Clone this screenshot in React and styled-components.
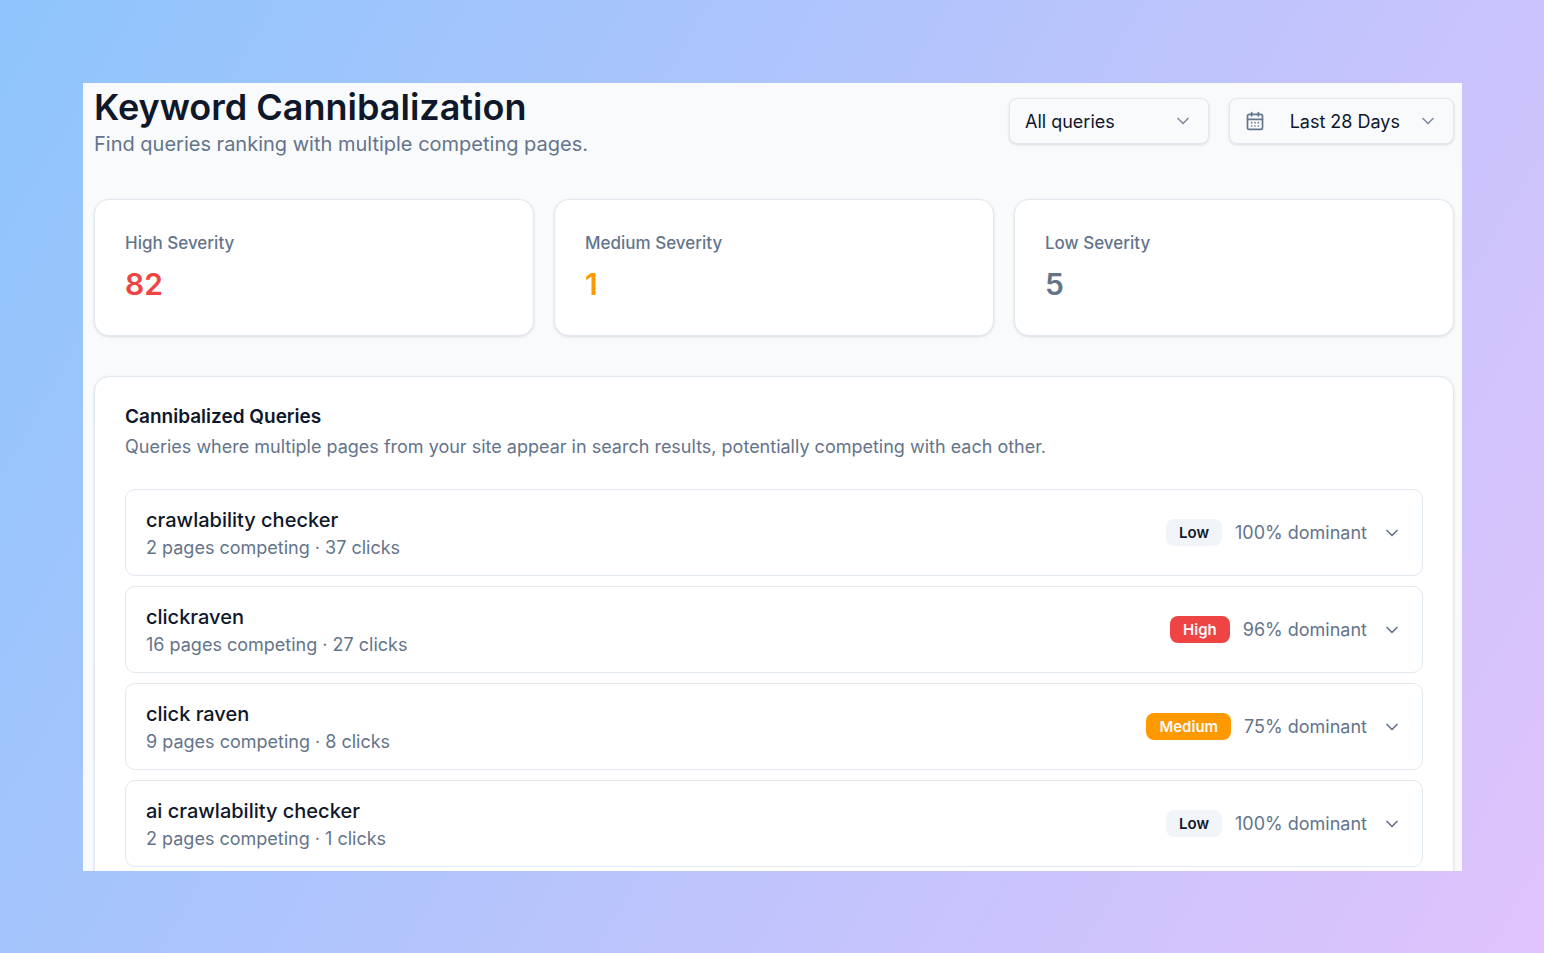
import React, { useState } from "react";
import styled, { createGlobalStyle } from "styled-components";
import { CalendarDays, ChevronDown } from "lucide-react";

const colors = {
  text: "#0f172a",
  muted: "#64748b",
  border: "#e2e8f0",
  red: "#ef4444",
  amber: "#ff9900",
  soft: "#f1f5f9",
};

const GlobalStyle = createGlobalStyle`
  *,
  *::before,
  *::after {
    box-sizing: border-box;
  }
  body {
    margin: 0;
    font-family: Inter, "Liberation Sans", sans-serif;
    color: ${colors.text};
  }
  button,
  select {
    font: inherit;
    color: inherit;
    cursor: pointer;
  }
  h1,
  h2,
  h3,
  p {
    margin: 0;
  }
`;

const Backdrop = styled.div`
  height: 100vh;
  padding: 83px 82px 82px 83px;
  background: linear-gradient(120deg, #8ec5fc 0%, #e0c3fc 100%);
`;

const Page = styled.main`
  height: 100%;
  overflow: hidden;
  padding: 0 8px 0 11px;
  background: #f8fafc;
`;

const PageHeader = styled.header`
  display: flex;
  align-items: center;
  justify-content: space-between;
  padding: 1px 0 41px;
`;

const Title = styled.h1`
  font-size: 36px;
  font-weight: 600;
  line-height: 46px;
`;

const Subtitle = styled.p`
  font-size: 20px;
  line-height: 28px;
  color: ${colors.muted};
`;

const Controls = styled.div`
  display: flex;
  gap: 20px;
`;

const SelectWrapper = styled.div`
  display: grid;
  align-items: center;
  width: 200px;
  svg {
    grid-area: 1 / 1;
    justify-self: end;
    margin-right: 16px;
    color: ${colors.muted};
    opacity: 0.8;
    pointer-events: none;
  }
`;

const Select = styled.select`
  grid-area: 1 / 1;
  appearance: none;
  height: 46px;
  padding: 0 15px;
  border: 1px solid ${colors.border};
  border-radius: 8px;
  background: #f8fafc;
  box-shadow: 0 1px 3px rgba(0, 0, 0, 0.12);
  font-size: 18px;
`;

const DateButton = styled.button`
  display: flex;
  align-items: center;
  height: 46px;
  width: 225px;
  padding: 0 15px;
  border: 1px solid ${colors.border};
  border-radius: 8px;
  background: #f8fafc;
  box-shadow: 0 1px 3px rgba(0, 0, 0, 0.12);
  font-size: 18px;
  svg {
    color: ${colors.muted};
  }
  svg:last-child {
    opacity: 0.8;
  }
  span {
    flex: 1;
    text-align: right;
    margin-right: 18px;
  }
`;

const Card = styled.section`
  padding: 29px 30px;
  border: 1px solid ${colors.border};
  border-radius: 15px;
  background: #fff;
  box-shadow: 0 1px 3px rgba(0, 0, 0, 0.12);
`;

const StatGrid = styled.div`
  display: grid;
  grid-template-columns: repeat(3, 1fr);
  gap: 20px;
  margin-bottom: 40px;
`;

const StatLabel = styled.h2`
  font-size: 17px;
  font-weight: 500;
  line-height: 28px;
  color: ${colors.muted};
`;

const StatValue = styled.p`
  padding: 8px 0 3px;
  font-size: 30px;
  font-weight: 600;
  line-height: 38px;
  color: ${(props) => props.$color};
`;

const CardTitle = styled.h2`
  font-size: 19px;
  font-weight: 600;
  line-height: 21px;
`;

const CardText = styled.p`
  margin: 7px 0 29px;
  font-size: 18px;
  line-height: 26px;
  color: ${colors.muted};
`;

const QueryList = styled.div`
  display: flex;
  flex-direction: column;
  gap: 10px;
`;

const QueryRow = styled.button`
  display: flex;
  align-items: center;
  width: 100%;
  padding: 15px 20px;
  border: 1px solid ${colors.border};
  border-radius: 10px;
  background: #fff;
  text-align: left;
  svg {
    margin-left: 15px;
    color: ${colors.muted};
  }
`;

const QueryInfo = styled.span`
  display: flex;
  flex: 1;
  flex-direction: column;
`;

const QueryName = styled.span`
  font-size: 20px;
  font-weight: 500;
  line-height: 30px;
`;

const QueryMeta = styled.span`
  font-size: 18px;
  line-height: 25px;
  color: ${colors.muted};
`;

const badgeStyles = {
  Low: { background: colors.soft, color: colors.text },
  High: { background: colors.red, color: "#f8fafc" },
  Medium: { background: colors.amber, color: "#f8fafc" },
};

const Badge = styled.span`
  margin-right: 13px;
  padding: 3px 13px;
  border-radius: 8px;
  background: ${(props) => badgeStyles[props.$severity].background};
  color: ${(props) => badgeStyles[props.$severity].color};
  font-size: 15px;
  font-weight: 600;
  line-height: 21px;
`;

const stats = [
  { label: "High Severity", value: 82, color: colors.red },
  { label: "Medium Severity", value: 1, color: colors.amber },
  { label: "Low Severity", value: 5, color: colors.muted },
];

const queries = [
  { name: "crawlability checker", pages: 2, clicks: 37, severity: "Low", share: 100 },
  { name: "clickraven", pages: 16, clicks: 27, severity: "High", share: 96 },
  { name: "click raven", pages: 9, clicks: 8, severity: "Medium", share: 75 },
  { name: "ai crawlability checker", pages: 2, clicks: 1, severity: "Low", share: 100 },
];

const Query = ({ query }) => {
  const [open, setOpen] = useState(false);
  return (
    <QueryRow type="button" aria-expanded={open} onClick={() => setOpen(!open)}>
      <QueryInfo>
        <QueryName>{query.name}</QueryName>
        <QueryMeta>
          {query.pages} pages competing · {query.clicks} clicks
        </QueryMeta>
      </QueryInfo>
      <Badge $severity={query.severity}>{query.severity}</Badge>
      <QueryMeta>{query.share}% dominant</QueryMeta>
      <ChevronDown size={20} strokeWidth={2} />
    </QueryRow>
  );
};

const App = () => (
  <>
    <GlobalStyle />
    <Backdrop>
      <Page>
        <PageHeader>
          <div>
            <Title>Keyword Cannibalization</Title>
            <Subtitle>Find queries ranking with multiple competing pages.</Subtitle>
          </div>
          <Controls>
            <SelectWrapper>
              <Select aria-label="Filter queries">
                <option>All queries</option>
              </Select>
              <ChevronDown size={20} strokeWidth={2} />
            </SelectWrapper>
            <DateButton type="button">
              <CalendarDays size={20} strokeWidth={2} />
              <span>Last 28 Days</span>
              <ChevronDown size={20} strokeWidth={2} />
            </DateButton>
          </Controls>
        </PageHeader>
        <StatGrid>
          {stats.map((stat) => (
            <Card key={stat.label}>
              <StatLabel>{stat.label}</StatLabel>
              <StatValue $color={stat.color}>{stat.value}</StatValue>
            </Card>
          ))}
        </StatGrid>
        <Card>
          <CardTitle>Cannibalized Queries</CardTitle>
          <CardText>
            Queries where multiple pages from your site appear in search results,
            potentially competing with each other.
          </CardText>
          <QueryList>
            {queries.map((query) => (
              <Query key={query.name} query={query} />
            ))}
          </QueryList>
        </Card>
      </Page>
    </Backdrop>
  </>
);

export default App;
